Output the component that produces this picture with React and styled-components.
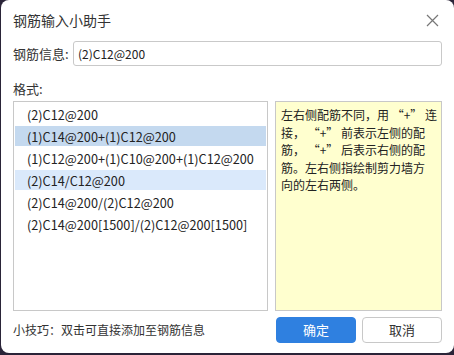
import React from "react";
import styled, { createGlobalStyle } from "styled-components";

const Global = createGlobalStyle`
  html, body { margin: 0; padding: 0; background: #2a2438; }
  body { width: 454px; height: 355px; overflow: hidden; }
  * { box-sizing: border-box; }
`;

const font = `"Microsoft YaHei", "Noto Sans CJK SC", "Noto Sans", sans-serif`;

const Dialog = styled.div`
  width: 453px;
  height: 353px;
  margin: 0 0 0 1px;
  background: #ffffff;
  border-radius: 8px;
  font-family: ${font};
  color: #333;
  display: flex;
  flex-direction: column;
  padding: 0 12px;
`;

const TitleBar = styled.div`
  height: 40px;
  display: flex;
  align-items: center;
  justify-content: space-between;
`;

const Title = styled.div`
  font-size: 14px;
  color: #333;
`;

const Close = styled.button`
  border: none;
  background: none;
  padding: 0;
  width: 14px;
  height: 14px;
  margin-right: 3px;
  display: flex;
  align-items: center;
  justify-content: center;
`;

const Field = styled.div`
  display: flex;
  align-items: center;
  gap: 7px;
  height: 26px;
`;

const Label = styled.div`
  font-size: 13px;
  width: 53px;
  white-space: nowrap;
`;

const Input = styled.div`
  flex: 1;
  height: 25px;
  border: 1px solid #c9c9c9;
  border-radius: 3px;
  font-size: 12px;
  display: flex;
  align-items: center;
  padding-left: 4px;
  color: #222;
`;

const Section = styled.div`
  font-size: 13px;
  margin-top: 12px;
  height: 20px;
  display: flex;
  align-items: center;
`;

const Panels = styled.div`
  display: flex;
  gap: 7px;
  margin-top: 3px;
  height: 210px;
`;

const List = styled.div`
  width: 257px;
  border: 1px solid #c8c8c8;
  padding: 2px 1px;
`;

const Row = styled.div`
  height: 20px;
  margin-bottom: 2px;
  display: flex;
  align-items: center;
  padding-left: 12px;
  font-size: 12.7px;
  color: #222;
  white-space: nowrap;
  background: ${(p) => (p.$state === "sel" ? "#c4d9ef" : p.$state === "hover" ? "#dae9fb" : "transparent")};
`;

const Help = styled.div`
  flex: 1;
  background: #ffffcf;
  border: 1px solid #c8c8c8;
  padding: 4px 4px 0 5px;
  font-size: 12px;
  line-height: 17.5px;
  color: #222;
`;

const HelpLine = styled.div`
  white-space: nowrap;
`;

const Footer = styled.div`
  display: flex;
  align-items: center;
  margin-top: 5px;
  height: 27px;
`;

const Tip = styled.div`
  font-size: 12px;
  flex: 1;
  color: #333;
`;

const Btn = styled.button`
  width: 80px;
  height: 26px;
  border-radius: 4px;
  font-family: ${font};
  font-size: 13px;
  margin-left: ${(p) => (p.$primary ? "0" : "6px")};
  border: 1px solid ${(p) => (p.$primary ? "#2f80e0" : "#c8c8c8")};
  background: ${(p) => (p.$primary ? "#2f80e0" : "#fff")};
  color: ${(p) => (p.$primary ? "#fff" : "#333")};
  padding: 0;
`;

const items = [
  ["(2)C12@200", ""],
  ["(1)C14@200+(1)C12@200", "sel"],
  ["(1)C12@200+(1)C10@200+(1)C12@200", ""],
  ["(2)C14/C12@200", "hover"],
  ["(2)C14@200/(2)C12@200", ""],
  ["(2)C14@200[1500]/(2)C12@200[1500]", ""],
];

const helpLines = [
  "左右侧配筋不同，用 “+” 连",
  "接， “+” 前表示左侧的配",
  "筋， “+” 后表示右侧的配",
  "筋。左右侧指绘制剪力墙方",
  "向的左右两侧。",
];

export default function App() {
  return (
    <>
      <Global />
      <Dialog lang="zh-CN">
        <TitleBar>
          <Title>钢筋输入小助手</Title>
          <Close aria-label="close">
            <svg width="13" height="13" viewBox="0 0 13 13">
              <path d="M1 1L12 12M12 1L1 12" stroke="#777" strokeWidth="1.2" />
            </svg>
          </Close>
        </TitleBar>
        <Field>
          <Label>钢筋信息:</Label>
          <Input>(2)C12@200</Input>
        </Field>
        <Section>格式:</Section>
        <Panels>
          <List>
            {items.map(([t, s]) => (
              <Row key={t} $state={s}>{t}</Row>
            ))}
          </List>
          <Help>
            {helpLines.map((l) => (
              <HelpLine key={l}>{l}</HelpLine>
            ))}
          </Help>
        </Panels>
        <Footer>
          <Tip>小技巧：双击可直接添加至钢筋信息</Tip>
          <Btn $primary>确定</Btn>
          <Btn>取消</Btn>
        </Footer>
      </Dialog>
    </>
  );
}
